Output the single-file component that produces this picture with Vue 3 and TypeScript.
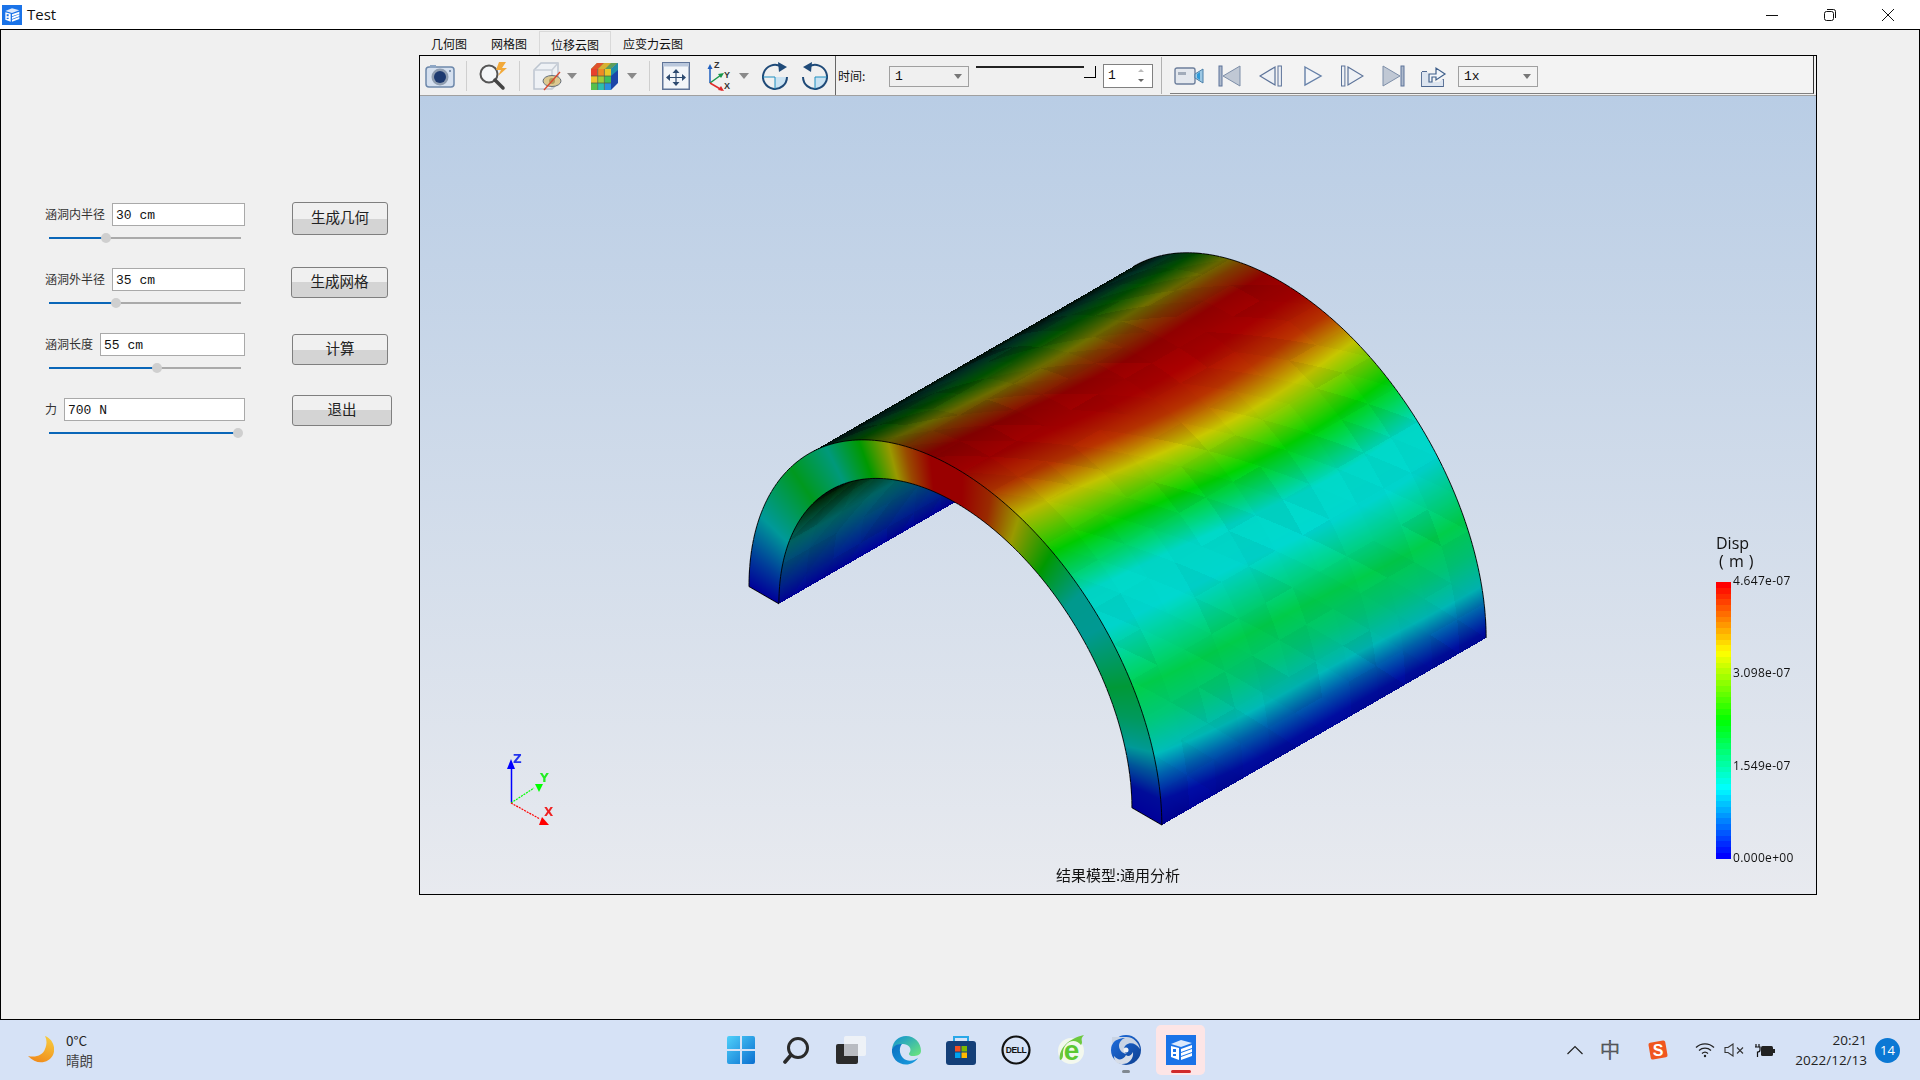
<template>
  <div class="app">
    <header class="titlebar">
      <svg class="title-icon" width="20" height="20" viewBox="0 0 30 30">
        <rect width="30" height="30" fill="#1a73e8" />
        <path d="M5 9 L15 5 L26 8 L15 12Z" fill="#dce9fb" />
        <path d="M5 11 L13 13 V25 L5 22Z" fill="#fff" />
        <path d="M15 14 L26 10 V13 L15 17Z M15 18 L26 14 V17 L15 21Z M15 22 L26 18 V21 L15 25Z" fill="#fff" />
        <path d="M7 14 H10 V17 H7Z M7 19 H10 V21 H7Z" fill="#1a73e8" />
      </svg>
      <span class="title-text">Test</span>
      <div class="win-controls">
        <svg width="12" height="12" viewBox="0 0 12 12"><path d="M0 6.5 H12" stroke="#111" /></svg>
        <svg width="12" height="12" viewBox="0 0 12 12" fill="none" stroke="#111"><rect x="0.5" y="2.5" width="9" height="9" rx="2" /><path d="M3 0.5 H9.5 Q11.5 .5 11.5 2.5 V9" /></svg>
        <svg width="12" height="12" viewBox="0 0 12 12"><path d="M0 0 L12 12 M12 0 L0 12" stroke="#111" /></svg>
      </div>
    </header>

    <main class="workspace">
      <aside class="side">
        <div v-for="row in rows" :key="row.label" class="row">
          <div class="field">
            <div class="field-top">
              <label class="field-label">{{ row.label }}</label>
              <div class="field-input">{{ row.value }}</div>
            </div>
            <div class="range">
              <div class="range-fill" :style="{ width: row.pos + 'px' }"></div>
              <div class="range-thumb" :style="{ left: row.pos + 'px' }"></div>
            </div>
          </div>
          <button class="push" :style="{ width: row.btnW + 'px', height: row.btnH + 'px', marginTop: row.btnY + 'px', marginLeft: row.btnX + 'px' }">
            {{ row.btn }}
          </button>
        </div>
      </aside>

      <section class="result">
        <nav class="tabs">
          <span class="tab">几何图</span>
          <span class="tab">网格图</span>
          <span class="tab active">位移云图</span>
          <span class="tab last">应变力云图</span>
        </nav>
        <div class="pane">
          <div class="toolbar">
            <!-- camera -->
            <svg class="ic cam" width="30" height="26" viewBox="0 0 30 26">
              <rect x="1" y="4" width="28" height="20" rx="3" fill="#d5e0ef" stroke="#6d88ab" stroke-width="1.5" />
              <rect x="5" y="2" width="6" height="3" fill="#8ea6c4" />
              <circle cx="15" cy="14" r="8.5" fill="#8f9db0" />
              <circle cx="15" cy="14" r="6" fill="#1d3a70" />
              <circle cx="25" cy="8" r="1" fill="#5f7898" />
            </svg>
            <i class="sep s1"></i>
            <!-- search and bolt -->
            <svg class="ic srch" width="32" height="30" viewBox="0 0 32 30">
              <circle cx="12" cy="13" r="8.5" fill="#f4f6f8" stroke="#555" stroke-width="2" />
              <path d="M18 19 L26 27" stroke="#444" stroke-width="3.5" stroke-linecap="round" />
              <path d="M22 1 H29 L25 7 H30 L21 15 L24 9 H19Z" fill="#f2a93a" />
            </svg>
            <i class="sep s2"></i>
            <!-- cube with crossed eye -->
            <svg class="ic cube" width="30" height="30" viewBox="0 0 30 30">
              <path d="M2 9 L9 2 H26 V22 L20 28 H2Z" fill="#eef1f5" stroke="#bcc4cf" stroke-width="1.5" />
              <path d="M2 9 H20 V28 M20 9 L26 2" fill="none" stroke="#c8ced7" stroke-width="1.5" />
              <ellipse cx="20" cy="20" rx="9" ry="5.5" fill="#dcc890" stroke="#66707c" />
              <circle cx="20" cy="20" r="3" fill="#b39a5a" />
              <path d="M12 29 L28 11" stroke="#d8452c" stroke-width="1.3" />
            </svg>
            <svg class="ic arr a1" width="10" height="6" viewBox="0 0 10 6"><path d="M0 0 H10 L5 6Z" fill="#8a8a8a" /></svg>
            <!-- coloured cube -->
            <svg class="ic cube2" width="28" height="28" viewBox="0 0 28 28">
              <path d="M1 7 L7 1 H28 L21 7Z" fill="#5f9e5a" />
              <path d="M7 1 H14 L8 7 H1Z" fill="#e0522c" />
              <path d="M14 1 H21 L15 7 H8Z" fill="#d8b032" />
              <path d="M21 7 L28 1 V21 L21 28Z" fill="#1c46a8" />
              <path d="M21 7 L28 1 V8 L21 14Z" fill="#1f8fa8" />
              <rect x="1" y="7" width="6.700" height="7" fill="#e8402c" />
              <rect x="7.700" y="7" width="6.700" height="7" fill="#f08a24" />
              <rect x="14.400" y="7" width="6.600" height="7" fill="#e8c828" />
              <rect x="1" y="14" width="6.700" height="7" fill="#eec22e" />
              <rect x="7.700" y="14" width="6.700" height="7" fill="#9ccd3a" />
              <rect x="14.400" y="14" width="6.600" height="7" fill="#3fbf5a" />
              <rect x="1" y="21" width="6.700" height="7" fill="#58bf4c" />
              <rect x="7.700" y="21" width="6.700" height="7" fill="#2cc0b0" />
              <rect x="14.400" y="21" width="6.600" height="7" fill="#2a8fe0" />
              <path d="M7.700 7 V28 M14.400 7 V28 M1 14 H21 M1 21 H21" stroke="#4e5a40" stroke-width=".7" />
            </svg>
            <svg class="ic arr a2" width="10" height="6" viewBox="0 0 10 6"><path d="M0 0 H10 L5 6Z" fill="#8a8a8a" /></svg>
            <i class="sep s3"></i>
            <!-- fit view -->
            <svg class="ic fit" width="28" height="28" viewBox="0 0 28 28">
              <rect x="0.750" y="0.750" width="26.500" height="26.500" fill="#f2f5f9" stroke="#5f7498" stroke-width="1.500" />
              <rect x="1" y="1" width="26" height="3.500" fill="#b9c7dc" />
              <path d="M14 7 L10.500 11 H17.500Z M14 24 L10.500 20 H17.500Z M4 15.500 L8 12 V19Z M24 15.500 L20 12 V19Z" fill="#2d4a70" />
              <path d="M14 10 V21 M8 15.500 H20" stroke="#2d4a70" stroke-width="1.200" />
            </svg>
            <!-- axes -->
            <svg class="ic axes" width="28" height="30" viewBox="0 0 28 30">
              <path d="M6 22 V7" stroke="#1f5fc0" stroke-width="1.5" />
              <path d="M6 3 L3.5 8 H8.5Z" fill="#1f5fc0" />
              <path d="M6 22 L17 14" stroke="#18964a" stroke-width="1.5" />
              <path d="M20 12 L14 13 L17 17Z" fill="#18964a" />
              <path d="M6 22 L18 29" stroke="#e02a2a" stroke-width="1.5" />
              <path d="M20 30 L14 29 L17 25Z" fill="#e02a2a" />
              <text x="10" y="7" class="axis-mini">Z</text>
              <text x="20" y="17" class="axis-mini">Y</text>
              <text x="20" y="28" class="axis-mini">X</text>
            </svg>
            <svg class="ic arr a3" width="10" height="6" viewBox="0 0 10 6"><path d="M0 0 H10 L5 6Z" fill="#8a8a8a" /></svg>
            <!-- rotate cw -->
            <svg class="ic rot1" width="26" height="28" viewBox="0 0 26 28">
              <path d="M13 15 H25 A12 12 0 0 1 13 27Z" fill="#c9e2f2" />
              <path d="M19 4.5 A12 12 0 1 0 25 15" fill="none" stroke="#1f4a78" stroke-width="2" />
              <path d="M1 15 H13 V27" fill="none" stroke="#1f8fc0" stroke-width="1" />
              <path d="M16 0 L25 5 L17 10Z" fill="#1f4a78" />
            </svg>
            <!-- rotate ccw -->
            <svg class="ic rot2" width="26" height="28" viewBox="0 0 26 28">
              <path d="M13 15 H25 A12 12 0 0 1 13 27Z" fill="#c9e2f2" />
              <path d="M7 4.5 A12 12 0 1 1 1 15" fill="none" stroke="#1f4a78" stroke-width="2" />
              <path d="M25 15 H13 V27" fill="none" stroke="#1f8fc0" stroke-width="1" />
              <path d="M10 0 L1 5 L9 10Z" fill="#1f4a78" />
            </svg>
            <i class="grip"></i>
            <span class="time-label">时间:</span>
            <div class="combo c-time"><span>1</span><svg width="8" height="5" viewBox="0 0 8 5"><path d="M0 0 H8 L4 5Z" fill="#777" /></svg></div>
            <div class="time-slider"><i class="handle"></i></div>
            <div class="spin">
              <span>1</span>
              <svg width="6" height="14" viewBox="0 0 6 14"><path d="M3 0 L6 3 H0Z" fill="#bbb" /><path d="M0 10 H6 L3 13Z" fill="#666" /></svg>
            </div>
            <i class="sep s4"></i>
            <div class="player">
              <!-- record -->
              <svg class="ic p-rec" width="30" height="18" viewBox="0 0 30 18">
                <rect x="1" y="1" width="20" height="16" rx="2" fill="#e4e8ee" stroke="#6d7f9c" stroke-width="1.4" />
                <rect x="4" y="5" width="8" height="3" fill="#a2acba" />
                <path d="M21 7 L29 2 V16 L21 11Z" fill="#9cc8e4" stroke="#4a7fa8" />
                <path d="M23 7 L26 5 V13 L23 11Z" fill="#2f9ad8" />
              </svg>
              <!-- first -->
              <svg class="ic p-first" width="24" height="22" viewBox="0 0 24 22">
                <rect x="1" y="1" width="3" height="20" fill="#aebacc" stroke="#5c7399" />
                <path d="M5 11 L22 1 V21Z" fill="#c0c8d4" stroke="#7d8ea8" />
              </svg>
              <!-- prev -->
              <svg class="ic p-prev" width="24" height="22" viewBox="0 0 24 22">
                <path d="M1 11 L16 2 V20Z" fill="#eef1f5" stroke="#5c7399" stroke-width="1.2" />
                <rect x="19" y="1" width="3.4" height="20" fill="#eef1f5" stroke="#5c7399" />
              </svg>
              <!-- play -->
              <svg class="ic p-play" width="20" height="22" viewBox="0 0 20 22">
                <path d="M2 2 L18 11 L2 20Z" fill="#f3f5f8" stroke="#6580a8" stroke-width="1.4" />
              </svg>
              <!-- next -->
              <svg class="ic p-next" width="24" height="22" viewBox="0 0 24 22">
                <rect x="1.5" y="1" width="3.4" height="20" fill="#eef1f5" stroke="#5c7399" />
                <path d="M8 2 L23 11 L8 20Z" fill="#eef1f5" stroke="#5c7399" stroke-width="1.2" />
              </svg>
              <!-- last -->
              <svg class="ic p-last" width="24" height="22" viewBox="0 0 24 22">
                <path d="M2 1 L19 11 L2 21Z" fill="#c0c8d4" stroke="#7d8ea8" />
                <rect x="20" y="1" width="3" height="20" fill="#aebacc" stroke="#5c7399" />
              </svg>
              <!-- export -->
              <svg class="ic p-exp" width="26" height="24" viewBox="0 0 26 24">
                <path d="M1 8 H6 M1 8 V22 H22 V15" fill="none" stroke="#4f6890" stroke-width="1.800" />
                <path d="M1 8 V22 H22 V15 L18 18 H7 V8Z" fill="#dde5f0" />
                <path d="M8 18 V10 H15 V4 L24 10 L15 16 V13 H11 V18Z" fill="#f2f5f9" stroke="#3f5f8a" stroke-width="1.200" />
              </svg>
              <div class="combo c-speed"><span>1x</span><svg width="8" height="5" viewBox="0 0 8 5"><path d="M0 0 H8 L4 5Z" fill="#777" /></svg></div>
            </div>
          </div>

          <div class="viewport">
            <canvas ref="modelCanvas" class="model" width="1396" height="798"></canvas>

            <svg class="triad" width="100" height="100" viewBox="0 0 100 100">
              <path d="M31.5 62.5 V26" stroke="#0000ff" stroke-width="1.5" />
              <path d="M31 19 L27 29 H35Z" fill="#0000ff" />
              <path d="M31 63 L54 48" stroke="#00ff00" stroke-width="1.2" stroke-dasharray="2 1" />
              <path d="M63 44 L55 44 L59 52Z" fill="#00ff00" />
              <path d="M31 63 L60 79" stroke="#ff0000" stroke-width="1.2" stroke-dasharray="2 1" />
              <path d="M69 85 L59 85 L62 77Z" fill="#ff0000" />
              <text x="33" y="23" class="axis-label" fill="#2233ee">Z</text>
              <text x="60" y="42" class="axis-label" fill="#22ee22">Y</text>
              <text x="64" y="76" class="axis-label" fill="#ee2222">X</text>
            </svg>

            <div class="legend">
              <div class="legend-title">Disp</div>
              <div class="legend-unit">( m )</div>
              <div class="legend-body">
                <div class="legend-bar">
                  <i v-for="(c, i) in bands" :key="i" :style="{ background: c }"></i>
                </div>
                <div class="legend-ticks">
                  <span v-for="t in ticks" :key="t">{{ t }}</span>
                </div>
              </div>
            </div>

            <div class="caption">结果模型:通用分析</div>
          </div>
        </div>
      </section>
    </main>

    <footer class="taskbar">
      <div class="weather">
        <svg width="26" height="28" viewBox="0 0 26 28">
          <defs>
            <linearGradient id="moonG" x1="0.7" y1="0" x2="0.3" y2="1"><stop offset="0" stop-color="#f7ca3e" /><stop offset="1" stop-color="#f08a1a" /></linearGradient>
          </defs>
          <path d="M17 0 C25 3 28 12 25 19 C21 27 9 30 0 20 C8 22 15 19 17 13 C19 8 19 4 17 0Z" fill="url(#moonG)" />
        </svg>
        <div class="weather-text">
          <span>0°C</span>
          <span class="dim">晴朗</span>
        </div>
      </div>

      <div class="dock">
        <div class="slot">
          <svg width="30" height="30" viewBox="0 0 30 30">
            <defs>
              <linearGradient id="winG" x1="0" y1="0" x2="1" y2="1"><stop offset="0" stop-color="#4fd0fa" /><stop offset="1" stop-color="#0a6fd0" /></linearGradient>
            </defs>
            <path d="M1 3 Q1 1 3 1 H14 V14 H1Z M16 1 H27 Q29 1 29 3 V14 H16Z M1 16 H14 V29 H3 Q1 29 1 27Z M16 16 H29 V27 Q29 29 27 29 H16Z" fill="url(#winG)" />
          </svg>
        </div>
        <div class="slot">
          <svg width="28" height="28" viewBox="0 0 28 28" fill="none" stroke="#2a2a2a" stroke-width="3">
            <circle cx="16" cy="12" r="9.5" />
            <path d="M9 19 L3 26" stroke-linecap="round" stroke-width="3.6" />
          </svg>
        </div>
        <div class="slot">
          <svg width="30" height="28" viewBox="0 0 30 28">
            <rect x="0" y="8" width="22" height="20" rx="2" fill="#2b2b2b" />
            <rect x="8" y="0" width="22" height="20" rx="2" fill="#f2f4f7" fill-opacity=".85" />
            <rect x="8" y="8" width="14" height="12" fill="#b9bcc2" />
          </svg>
        </div>
        <div class="slot">
          <svg width="30" height="30" viewBox="0 0 30 30">
            <defs>
              <linearGradient id="edgeA" x1="0" y1="0" x2="1" y2="1"><stop offset="0" stop-color="#0d8ed8" /><stop offset="1" stop-color="#6fe87a" /></linearGradient>
              <linearGradient id="edgeB" x1="0" y1="0" x2="1" y2="1"><stop offset="0" stop-color="#0a6ec0" /><stop offset="1" stop-color="#1a9fe0" /></linearGradient>
            </defs>
            <path d="M1 14 C2 6 8 1 15 1 C24 1 30 8 30 16 C30 20 26 21 22 21 C18 21 17 19 19 17 C21 13 17 9 12 9 C7 9 3 11 1 14Z" fill="url(#edgeA)" />
            <path d="M1 14 C3 10 7 8.500 11 9 C8 12 8 19 12 23 C16 27 23 26 27 23 C24 27 20 29.500 15 29.500 C7 29.500 0 23 1 14Z" fill="url(#edgeB)" />
          </svg>
        </div>
        <div class="slot">
          <svg width="30" height="30" viewBox="0 0 30 30">
            <path d="M8 7 V2 H22 V7" fill="none" stroke="#29a8e8" stroke-width="2" />
            <rect x="0" y="6" width="30" height="24" rx="3" fill="#143f78" />
            <rect x="9" y="11" width="5.500" height="5.500" fill="#f25022" />
            <rect x="15.500" y="11" width="5.500" height="5.500" fill="#7fba00" />
            <rect x="9" y="17.500" width="5.500" height="5.500" fill="#00a4ef" />
            <rect x="15.500" y="17.500" width="5.500" height="5.500" fill="#ffb900" />
          </svg>
        </div>
        <div class="slot">
          <svg width="30" height="30" viewBox="0 0 30 30">
            <circle cx="15" cy="15" r="13.500" fill="none" stroke="#111" stroke-width="2.200" />
            <text x="15" y="18" text-anchor="middle" class="dell">DELL</text>
          </svg>
        </div>
        <div class="slot">
          <svg width="28" height="30" viewBox="0 0 28 30">
            <circle cx="14" cy="16" r="13" fill="#f3f8ee" />
            <path d="M3 25 C1 14 12 3 27 0 C22 5 27 6 24 10 C17 1 5 8 6 20 C6 22 5 25 3 25Z" fill="#6dc93f" />
            <text x="14.500" y="25" text-anchor="middle" class="ie">e</text>
          </svg>
        </div>
        <div class="slot">
          <svg width="30" height="30" viewBox="0 0 30 30">
            <defs>
              <linearGradient id="swA" x1="0" y1="0" x2="1" y2="1"><stop offset="0" stop-color="#1f6fe0" /><stop offset="1" stop-color="#0d3f90" /></linearGradient>
            </defs>
            <circle cx="15" cy="15" r="15" fill="url(#swA)" />
            <path d="M1 2 H14 C22 1 28 8 29 14 C25 8 19 7 15 10 C12 12 13 18 16 19 C13 19 8 16 8 11 C8 7 11 4 14 3 C9 3 3 5 1 10Z" fill="#c9d4e4" />
            <path d="M3 21 C8 27 13 24 15 20 C17 22 20 21 22 17 C23 24 17 30 10 29 C6 29 3 26 3 21Z" fill="#d6dde8" />
            <circle cx="15" cy="15" r="2.500" fill="#eef2f7" />
          </svg>
          <i class="dot"></i>
        </div>
        <div class="slot current">
          <svg width="30" height="30" viewBox="0 0 30 30">
            <rect width="30" height="30" fill="#1a73e8" />
            <path d="M5 9 L15 5 L26 8 L15 12Z" fill="#dce9fb" />
            <path d="M5 11 L13 13 V25 L5 22Z" fill="#fff" />
            <path d="M15 14 L26 10 V13 L15 17Z M15 18 L26 14 V17 L15 21Z M15 22 L26 18 V21 L15 25Z" fill="#fff" />
            <path d="M7 14 H10 V17 H7Z M7 19 H10 V21 H7Z" fill="#1a73e8" />
          </svg>
          <i class="dot red"></i>
        </div>
      </div>

      <div class="tray">
        <svg class="t-chev" width="16" height="10" viewBox="0 0 16 10"><path d="M0.500 9 L8 1.500 L15.500 9" fill="none" stroke="#222" stroke-width="1.200" /></svg>
        <span class="t-ime">中</span>
        <svg class="t-sogou" width="20" height="20" viewBox="0 0 20 20">
          <rect x="1.500" y="1.500" width="17" height="17" rx="2" fill="#f0561e" transform="rotate(-10 10 10)" />
          <text x="10" y="15.500" text-anchor="middle" class="sogou">S</text>
        </svg>
        <svg class="t-wifi" width="20" height="16" viewBox="0 0 20 16" fill="none" stroke="#222" stroke-width="1.300">
          <path d="M1 5.500 A13 13 0 0 1 19 5.500 M4 8.500 A9 9 0 0 1 16 8.500 M7 11.500 A4.500 4.500 0 0 1 13 11.500" />
          <circle cx="10" cy="14" r="1.200" fill="#222" stroke="none" />
        </svg>
        <svg class="t-vol" width="20" height="14" viewBox="0 0 20 14" fill="none" stroke="#333" stroke-width="1.100">
          <path d="M1 4.500 H4 L9 1 V13 L4 9.500 H1Z" />
          <path d="M13 4.500 L19 10.500 M19 4.500 L13 10.500" />
        </svg>
        <svg class="t-bat" width="20" height="16" viewBox="0 0 20 16">
          <path d="M1 2 V5 M4 2 V5 M0 5 H5 V8 Q5 10 2.500 10 V15" fill="none" stroke="#111" stroke-width="1.200" />
          <rect x="6" y="4" width="12" height="10" rx="1.500" fill="#222" />
          <rect x="18" y="7" width="2" height="4" fill="#222" />
        </svg>
        <div class="clock">
          <span>20:21</span>
          <span>2022/12/13</span>
        </div>
        <span class="badge">14</span>
      </div>
    </footer>
  </div>
</template>

<script setup lang="ts">
import { onMounted, ref } from 'vue';

interface FormRow {
  label: string;
  value: string;
  pos: number;
  btn: string;
  btnW: number;
  btnH: number;
  btnY: number;
  btnX: number;
}

const rows: FormRow[] = [
  { label: '涵洞内半径', value: '30 cm', pos: 57, btn: '生成几何', btnW: 96, btnH: 33, btnY: -1, btnX: 47 },
  { label: '涵洞外半径', value: '35 cm', pos: 67, btn: '生成网格', btnW: 97, btnH: 31, btnY: -1, btnX: 46 },
  { label: '涵洞长度', value: '55 cm', pos: 108, btn: '计算', btnW: 96, btnH: 31, btnY: 1, btnX: 47 },
  { label: '力', value: '700 N', pos: 189, btn: '退出', btnW: 100, btnH: 31, btnY: -3, btnX: 47 }
];

const ticks = ['4.647e-07', '3.098e-07', '1.549e-07', '0.000e+00'];

// Same rainbow as the solver's scalar bar: blue, cyan, green, yellow, red
function jet(t: number): [number, number, number] {
  const v = Math.max(0, Math.min(1, t)) * 4;
  if (v < 1) return [0, v, 1];
  if (v < 2) return [0, 1, 2 - v];
  if (v < 3) return [v - 2, 1, 0];
  return [1, 4 - v, 0];
}

const bands = Array.from({ length: 48 }, (_, i) => {
  const [r, g, b] = jet(1 - i / 47);
  return `rgb(${Math.round(r * 255)},${Math.round(g * 255)},${Math.round(b * 255)})`;
});

// Displacement along the arch, angle in degrees from the right foot
const profile: [number, number][] = [
  [0, 0], [6, 0.02], [12, 0.14], [17, 0.26], [24, 0.35], [31, 0.41], [38, 0.33], [44, 0.26],
  [52, 0.27], [60, 0.45], [66, 0.6], [72, 0.75], [80, 0.93], [88, 1], [97, 1], [104, 0.88],
  [109, 0.75], [118, 0.5], [129, 0.3], [143, 0.45], [161, 0.25], [172, 0.1], [180, 0]
];

function scalarAt(deg: number): number {
  const d = Math.max(0, Math.min(180, deg));
  for (let i = 1; i < profile.length; i++) {
    if (d <= profile[i][0]) {
      const [a, va] = profile[i - 1];
      const [b, vb] = profile[i];
      return va + ((vb - va) * (d - a)) / (b - a);
    }
  }
  return 0;
}

function hash(a: number, b: number): number {
  const s = Math.sin(a * 127.1 + b * 311.7) * 43758.5453;
  return s - Math.floor(s);
}

const modelCanvas = ref<HTMLCanvasElement | null>(null);

function drawModel(canvas: HTMLCanvasElement) {
  const ctx = canvas.getContext('2d');
  if (!ctx) return;
  const W = canvas.width;
  const H = canvas.height;
  const img = ctx.createImageData(W, H);

  // Model units are the crop pixels the arch was measured in
  const SX = 2.0103;
  const SY = 2.608;
  const OX = 320;
  const OY = 142.4;
  const CX = 433;
  const CY = 1219;
  const AX = 415;
  const AY = 311;
  const BH = 620;
  const EX = 652;
  const EY = -488;
  const INNER = 0.855;
  const k = EY / EX;
  const Q = AY - k * AX;
  const R = Math.hypot(Q, BH);
  const PHI = Math.atan2(BH, Q);
  const RAD = 180 / Math.PI;

  const put = (px: number, py: number, t: number, shade: number) => {
    const [r, g, b] = jet(t);
    const o = (py * W + px) * 4;
    img.data[o] = r * shade * 255;
    img.data[o + 1] = g * shade * 255;
    img.data[o + 2] = b * shade * 255;
    img.data[o + 3] = 255;
  };

  const facet = (deg: number, v: number) => {
    const fu = deg / 8;
    const fv = v * 12;
    const i = Math.floor(fu);
    const j = Math.floor(fv);
    const tri = fu - i + (fv - j) > 1 ? 1 : 0;
    return (hash(i + tri * 0.37, j) - 0.5) * 0.05;
  };

  for (let py = 0; py < H; py++) {
    for (let px = 0; px < W; px++) {
      const rx = (px + 0.5 - OX) * SX - CX;
      const ry = (py + 0.5 - OY) * SY - CY;

      // end ring
      const u = rx / AX;
      const rs = (AY * u - ry) / BH;
      const r = Math.hypot(u, rs);
      if (rs >= 0 && r <= 1 && r >= INNER) {
        put(px, py, scalarAt(Math.atan2(rs, u) * RAD), 0.6);
        continue;
      }

      const w = (ry - k * rx) / R;

      // outer shell
      if (Math.abs(w) <= 1) {
        const th = Math.acos(w) - PHI;
        const deg = th * RAD;
        if (deg >= 0 && deg <= 135) {
          const v = (rx - AX * Math.cos(th)) / EX;
          if (v >= 0 && v <= 1) {
            const wave = Math.sin(v * 7 + deg * 0.05) * 0.7 + 2 * Math.sin(Math.PI * v);
            const t = scalarAt(deg + 4 * v + wave);
            const shade = Math.max(0.05, 0.83 * Math.cos((deg - 45) / RAD) + facet(deg, v));
            put(px, py, t, shade);
            continue;
          }
        }
      }

      // inside of the arch seen through the opening
      const wi = w / INNER;
      if (Math.abs(wi) <= 1) {
        const th = 2 * Math.PI - Math.acos(wi) - PHI;
        const deg = th * RAD;
        if (deg >= 135 && deg <= 180) {
          const v = (rx - INNER * AX * Math.cos(th)) / EX;
          if (v >= 0 && v <= 1) {
            const shade = Math.max(0.04, -0.83 * Math.cos((deg - 45) / RAD) + facet(deg, v));
            put(px, py, scalarAt(deg), shade);
          }
        }
      }
    }
  }
  ctx.putImageData(img, 0, 0);

  const P = (deg: number, scale: number, v: number): [number, number] => {
    const c = Math.cos(deg / RAD);
    const s = Math.sin(deg / RAD);
    return [
      (CX + scale * AX * c + v * EX) / SX + OX,
      (CY + scale * (AY * c - BH * s) + v * EY) / SY + OY
    ];
  };
  const arc = (from: number, to: number, scale: number, v: number) => {
    ctx.beginPath();
    for (let d = from; d <= to; d += 1) {
      const [x, y] = P(d, scale, v);
      if (d === from) ctx.moveTo(x, y);
      else ctx.lineTo(x, y);
    }
    ctx.stroke();
  };

  ctx.strokeStyle = 'rgba(0,0,0,0.9)';
  ctx.lineWidth = 1;
  arc(0, 180, 1, 0);
  arc(0, 180, INNER, 0);
  arc(0, 135, 1, 1);
  const seg = (a: [number, number], b: [number, number]) => {
    ctx.beginPath();
    ctx.moveTo(a[0], a[1]);
    ctx.lineTo(b[0], b[1]);
    ctx.stroke();
  };
  seg(P(0, 1, 0), P(0, INNER, 0));
  seg(P(180, 1, 0), P(180, INNER, 0));
}

onMounted(() => {
  if (modelCanvas.value) drawModel(modelCanvas.value);
});
</script>

<style scoped>
.app {
  width: 1920px;
  height: 1080px;
  display: flex;
  flex-direction: column;
  overflow: hidden;
  background: #fff;
  font-family: "Noto Sans CJK SC", "Noto Sans", sans-serif;
  color: #111;
}

/* Title bar */
.titlebar {
  height: 29px;
  display: flex;
  align-items: center;
  padding-left: 2px;
}
.title-icon {
  margin-top: 1px;
}
.title-text {
  margin-left: 5px;
  margin-top: -2px;
  font-family: "Open Sans", sans-serif;
  font-size: 15px;
}
.win-controls {
  margin-left: auto;
  margin-right: 26px;
  display: flex;
  gap: 46px;
}

/* Main window */
.workspace {
  height: 991px;
  box-sizing: border-box;
  border: 1px solid #000;
  background: #f0f0f0;
  display: flex;
  align-items: flex-start;
}
.side {
  width: 418px;
  flex: none;
  box-sizing: border-box;
  padding: 173px 0 0 44px;
}
.row {
  height: 65px;
  display: flex;
  align-items: flex-start;
}
.field {
  width: 200px;
  flex: none;
}
.field-top {
  display: flex;
  align-items: center;
  gap: 7px;
}
.field-label {
  font-size: 12px;
  line-height: 16px;
  margin-top: -2px;
  color: #333;
}
.field-input {
  flex: 1;
  height: 23px;
  box-sizing: border-box;
  border: 1px solid #a9a9a9;
  background: #fff;
  padding-left: 3px;
  font-family: "Liberation Mono", monospace;
  font-size: 13px;
  line-height: 23px;
  color: #111;
}
.range {
  position: relative;
  width: 192px;
  height: 2px;
  margin: 11px 0 0 4px;
  background: #aaa;
}
.range-fill {
  height: 2px;
  background: #0a66b8;
}
.range-thumb {
  position: absolute;
  top: -4px;
  width: 10px;
  height: 10px;
  margin-left: -5px;
  border-radius: 50%;
  background: #cfcfcf;
}
.push {
  flex: none;
  box-sizing: border-box;
  padding: 0 0 3px;
  border: 1px solid #7f7f7f;
  border-radius: 3px;
  background: linear-gradient(#f0f0f0 50%, #d4d4d4 50%);
  font-family: inherit;
  font-size: 14.5px;
  line-height: 20px;
  color: #222;
}

/* Result pane */
.result {
  width: 1398px;
  flex: none;
  padding-top: 1px;
}
.tabs {
  height: 24px;
  display: flex;
  align-items: stretch;
  font-size: 12px;
  color: #111;
}
.tab {
  display: flex;
  align-items: center;
  padding: 0 12px;
}
.tab.active {
  padding: 0 11px;
  box-sizing: border-box;
  height: 25px;
  border: 1px solid #d9d9d9;
  border-bottom: 0;
}
.tab.last {
  padding-left: 12px;
}
.pane {
  height: 840px;
  box-sizing: border-box;
  border: 1px solid #000;
  position: relative;
  display: flex;
  flex-direction: column;
}
.toolbar {
  height: 40px;
  flex: none;
  box-sizing: border-box;
  border-bottom: 1px solid #a0a0a0;
  display: flex;
  align-items: center;
  background: #f0f0f0;
}
.ic {
  flex: none;
  display: block;
}
.sep {
  width: 1px;
  height: 30px;
  flex: none;
  background: #cfcfcf;
}
.cam { margin-left: 5px; }
.s1 { margin-left: 11px; }
.srch { margin-left: 10px; }
.s2 { margin-left: 10px; }
.cube { margin-left: 12px; }
.a1 { margin-left: 5px; }
.cube2 { margin-left: 13px; }
.a2 { margin-left: 9px; }
.s3 { margin-left: 12px; }
.fit { margin-left: 12px; }
.axes { margin-left: 14px; }
.a3 { margin-left: 7px; }
.rot1 { margin-left: 13px; }
.rot2 { margin-left: 14px; }
.grip {
  width: 1px;
  height: 39px;
  flex: none;
  margin-left: 7px;
  background: #666;
}
.time-label {
  margin-left: 2px;
  width: 36px;
  flex: none;
  font-size: 12px;
}
.combo {
  height: 21px;
  box-sizing: border-box;
  border: 1px solid #a0a0a0;
  display: flex;
  align-items: center;
  justify-content: space-between;
  padding: 1px 6px 0 5px;
  font-family: "Liberation Mono", monospace;
  font-size: 13px;
  flex: none;
}
.c-time {
  width: 80px;
  margin: 1px 0 0 15px;
}
.time-slider {
  position: relative;
  width: 120px;
  height: 12px;
  margin: -8px 0 0 7px;
  flex: none;
  border-top: 2px solid #222;
  box-sizing: border-box;
}
.handle {
  position: absolute;
  right: 0;
  top: -2px;
  width: 12px;
  height: 12px;
  box-sizing: border-box;
  border-right: 1px solid #000;
  border-bottom: 1px solid #000;
  background: #f0f0f0;
}
.spin {
  width: 50px;
  height: 24px;
  margin-left: 7px;
  flex: none;
  box-sizing: border-box;
  border: 1px solid #808080;
  background: #fff;
  display: flex;
  align-items: center;
  justify-content: space-between;
  padding: 0 8px 0 4px;
  font-family: "Liberation Mono", monospace;
  font-size: 13px;
}
.s4 {
  height: 37px;
  margin-left: 8px;
  background: #b0b0b0;
}
.player {
  margin-left: 8px;
  width: 644px;
  height: 38px;
  align-self: flex-start;
  flex: none;
  box-sizing: border-box;
  padding-top: 3px;
  border-bottom: 1px solid #808080;
  border-right: 1px solid #333;
  display: flex;
  align-items: center;
  background: #f3f3f3;
}
.p-rec { margin-left: 4px; }
.p-first { margin-left: 14px; }
.p-prev { margin-left: 17px; }
.p-play { margin-left: 20px; }
.p-next { margin-left: 17px; }
.p-last { margin-left: 17px; }
.p-exp { margin-left: 16px; }
.c-speed {
  width: 80px;
  margin-left: 11px;
}
.axis-mini {
  font-family: "Liberation Sans", sans-serif;
  font-size: 9px;
  font-weight: 700;
  fill: #333;
}

/* 3D view */
.viewport {
  flex: 1;
  position: relative;
  overflow: hidden;
  background: linear-gradient(#b9cde5, #e8eaef);
}
.model {
  position: absolute;
  left: 0;
  top: 0;
  display: block;
}
.triad {
  position: absolute;
  left: 60px;
  top: 644px;
}
.axis-label {
  font-family: "DejaVu Sans", sans-serif;
  font-size: 12px;
  font-weight: 700;
}
.legend {
  position: absolute;
  left: 1296px;
  top: 438px;
  color: #111;
  font-family: "Open Sans", sans-serif;
}
.legend-title {
  font-size: 16px;
  line-height: 18px;
}
.legend-unit {
  font-size: 16px;
  line-height: 18px;
  padding-left: 3px;
  word-spacing: 1px;
  white-space: pre;
  margin-bottom: 12px;
}
.legend-body {
  display: flex;
  gap: 2px;
}
.legend-bar {
  width: 15px;
  height: 277px;
  display: flex;
  flex-direction: column;
}
.legend-bar i {
  flex: 1;
}
.legend-ticks {
  height: 291px;
  margin: -8px 0 -6px;
  display: flex;
  flex-direction: column;
  justify-content: space-between;
  font-size: 12px;
  letter-spacing: 0.3px;
  line-height: 14px;
  white-space: nowrap;
}
.caption {
  position: absolute;
  left: 0;
  right: 0;
  bottom: 10px;
  text-align: center;
  font-size: 15px;
  line-height: 18px;
  color: #111;
}

/* Taskbar */
.taskbar {
  height: 60px;
  flex: none;
  display: grid;
  grid-template-columns: 1fr auto 1fr;
  align-items: center;
  background: #d6e2f6;
}
.weather {
  display: flex;
  align-items: center;
  gap: 12px;
  padding-left: 28px;
}
.weather-text {
  display: flex;
  flex-direction: column;
  font-size: 13.5px;
  line-height: 20px;
  color: #222;
}
.dim {
  color: #444;
}
.dock {
  display: flex;
  margin-left: 1px;
}
.slot {
  width: 55px;
  height: 50px;
  box-sizing: border-box;
  display: flex;
  align-items: center;
  justify-content: center;
  position: relative;
}
.slot.current {
  width: 49px;
  margin: 0 3px;
  background: #fde5e6;
  border-radius: 5px;
}
.dot {
  position: absolute;
  left: 50%;
  bottom: 2px;
  width: 8px;
  height: 3px;
  margin-left: -4px;
  border-radius: 2px;
  background: #808890;
}
.dot.red {
  width: 20px;
  margin-left: -10px;
  background: #d12a2a;
}
.tray {
  display: flex;
  align-items: center;
  justify-content: flex-end;
  padding-right: 20px;
}
.t-ime {
  margin-left: 17px;
  width: 20px;
  font-size: 20px;
  font-weight: 300;
  line-height: 24px;
  text-align: center;
  color: #d6e2f6;
  -webkit-text-stroke: 0.7px #333;
}
.t-sogou { margin-left: 28px; }
.t-wifi { margin-left: 27px; }
.t-vol { margin-left: 9px; }
.t-bat { margin-left: 11px; }
.clock {
  margin-left: 20px;
  width: 72px;
  display: flex;
  flex-direction: column;
  align-items: flex-end;
  font-family: "Open Sans", sans-serif;
  font-size: 13.5px;
  line-height: 20px;
  color: #222;
  white-space: nowrap;
}
.badge {
  margin-left: 8px;
  width: 25px;
  height: 25px;
  border-radius: 50%;
  background: #0b78d4;
  color: #fff;
  font-family: "Open Sans", sans-serif;
  font-size: 13px;
  line-height: 25px;
  text-align: center;
}
.dell {
  font-family: "Liberation Sans", sans-serif;
  font-size: 8.5px;
  font-weight: 700;
  letter-spacing: -0.4px;
  fill: #111;
}
.ie {
  font-family: "Liberation Sans", sans-serif;
  font-size: 28px;
  font-weight: 700;
  fill: #5cc832;
}
.sogou {
  font-family: "Liberation Sans", sans-serif;
  font-size: 16px;
  font-weight: 700;
  fill: #fff;
}
</style>
